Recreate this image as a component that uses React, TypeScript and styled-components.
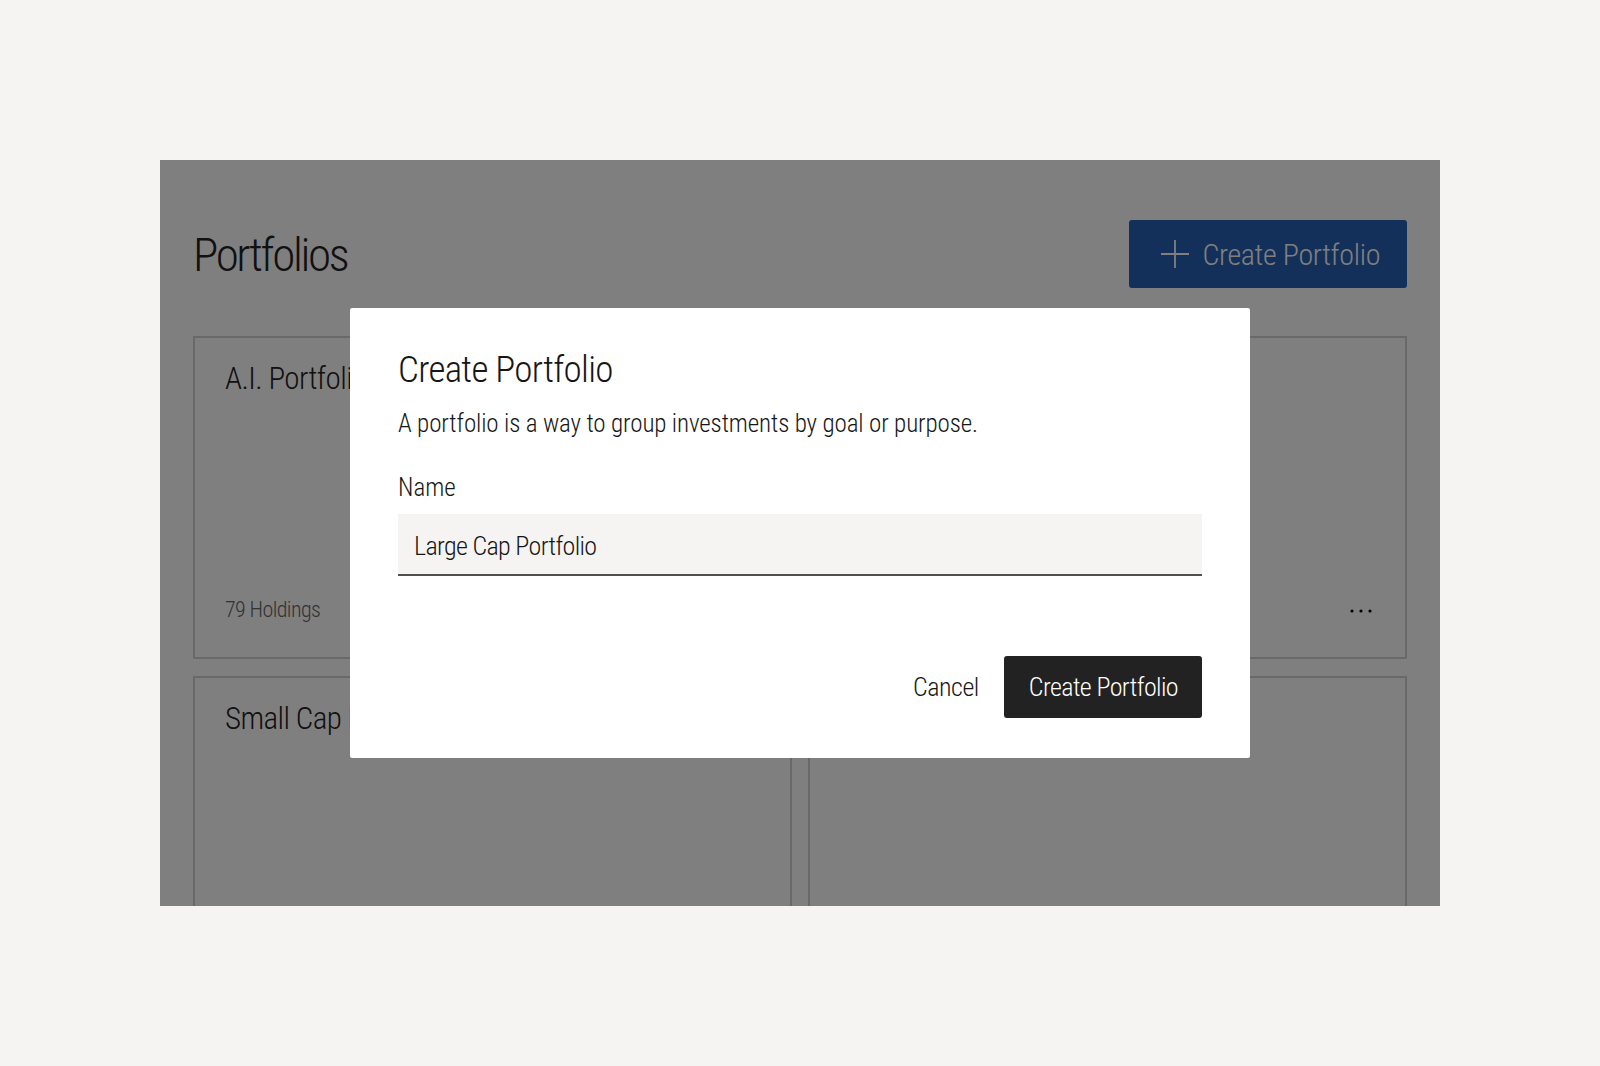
import React from "react";
import styled, { createGlobalStyle } from "styled-components";

const GlobalStyle = createGlobalStyle`
  * { box-sizing: border-box; }
  body {
    margin: 0;
    background: #f5f4f2;
    font-family: Roboto, "Liberation Sans", sans-serif;
    font-stretch: 75%;
    font-weight: 300;
    color: #161616;
  }
`;

const Page = styled.div`
  padding: 160px;
  height: 1066px;
`;

const Frame = styled.div`
  position: relative;
  width: 1280px;
  height: 746px;
  overflow: hidden;
  background: #ffffff;
`;

const Content = styled.main`
  padding: 60px 33px 0;
`;

const Header = styled.header`
  display: flex;
  align-items: center;
  justify-content: space-between;
  height: 68px;
`;

const PageTitle = styled.h1`
  margin: 0;
  font-size: 47px;
  line-height: 1;
  font-weight: 300;
  letter-spacing: -2.4px;
  color: #222;
`;

const PrimaryButton = styled.button`
  display: flex;
  align-items: center;
  gap: 13px;
  height: 68px;
  padding: 0 27px 0 32px;
  border: none;
  border-radius: 3px;
  background: #2660b4;
  color: #ffffff;
  font-family: inherit;
  font-stretch: 75%;
  font-weight: 300;
  font-size: 30px;
  letter-spacing: -0.35px;
`;

const Grid = styled.section`
  display: grid;
  grid-template-columns: 1fr 1fr;
  grid-auto-rows: 323px;
  gap: 17px 16px;
  margin-top: 48px;
`;

const Card = styled.article`
  display: flex;
  flex-direction: column;
  justify-content: space-between;
  border: 2px solid #d2d2d2;
  padding: 22px 33px 32px 30px;
`;

const CardTitle = styled.h2`
  margin: 0;
  font-size: 31px;
  line-height: 1.2;
  font-weight: 300;
  letter-spacing: -0.6px;
  color: #222;
`;

const CardFooter = styled.div`
  display: flex;
  align-items: center;
  justify-content: space-between;
`;

const Holdings = styled.span`
  font-size: 22px;
  line-height: 1.3;
  letter-spacing: -0.6px;
  color: #666;
`;

const MoreButton = styled.span`
  display: flex;
`;

const Overlay = styled.div`
  position: absolute;
  inset: 0;
  display: flex;
  align-items: center;
  justify-content: center;
  background: rgba(0, 0, 0, 0.5);
`;

const Modal = styled.div`
  display: flex;
  flex-direction: column;
  width: 900px;
  height: 450px;
  padding: 40px 48px 40px;
  background: #ffffff;
  border-radius: 2px;
`;

const ModalTitle = styled.h2`
  margin: 0;
  font-size: 37px;
  line-height: 1.2;
  font-weight: 300;
  letter-spacing: -0.7px;
`;

const ModalText = styled.p`
  margin: 17px 0 0;
  font-size: 25px;
  line-height: 1.2;
  letter-spacing: -0.12px;
`;

const Label = styled.label`
  display: block;
  margin-top: 34px;
  font-size: 25px;
  line-height: 1.2;
`;

const TextInput = styled.input`
  display: block;
  width: 100%;
  height: 62px;
  margin-top: 11px;
  padding: 4px 16px 0;
  border: none;
  border-bottom: 2px solid #4f4f4f;
  border-radius: 0;
  background: #f5f4f2;
  color: #161616;
  font-family: inherit;
  font-stretch: 75%;
  font-weight: 300;
  font-size: 26px;
  letter-spacing: -0.65px;
  outline: none;
`;

const Actions = styled.div`
  display: flex;
  justify-content: flex-end;
  align-items: center;
  gap: 25px;
  margin-top: auto;
`;

const GhostButton = styled.button`
  padding: 0;
  border: none;
  background: none;
  color: #161616;
  font-family: inherit;
  font-stretch: 75%;
  font-weight: 300;
  font-size: 26px;
  letter-spacing: -0.5px;
`;

const DarkButton = styled.button`
  height: 62px;
  padding: 0 24px 0 25px;
  border: none;
  border-radius: 3px;
  background: #222222;
  color: #ffffff;
  font-family: inherit;
  font-stretch: 75%;
  font-weight: 300;
  font-size: 26px;
  letter-spacing: -0.6px;
`;

const PlusIcon = () => (
  <svg width="28" height="28" viewBox="0 0 28 28" fill="none">
    <path d="M14 0v28M0 14h28" stroke="currentColor" strokeWidth="1.8" />
  </svg>
);

const DotsIcon = () => (
  <svg width="22" height="4" viewBox="0 0 22 4">
    <circle cx="2" cy="2" r="1.6" fill="#000" />
    <circle cx="11" cy="2" r="1.6" fill="#000" />
    <circle cx="20" cy="2" r="1.6" fill="#000" />
  </svg>
);

const portfolios = [
  { name: "A.I. Portfolio", holdings: 79 },
  { name: "Tech Growth", holdings: 42 },
  { name: "Small Cap Portfolio", holdings: 120 },
  { name: "Dividend", holdings: 35 },
];

export default function App() {
  return (
    <>
      <GlobalStyle />
      <Page>
        <Frame>
          <Content>
            <Header>
              <PageTitle>Portfolios</PageTitle>
              <PrimaryButton>
                <PlusIcon />
                Create Portfolio
              </PrimaryButton>
            </Header>
            <Grid>
              {portfolios.map((p) => (
                <Card key={p.name}>
                  <CardTitle>{p.name}</CardTitle>
                  <CardFooter>
                    <Holdings>{p.holdings} Holdings</Holdings>
                    <MoreButton>
                      <DotsIcon />
                    </MoreButton>
                  </CardFooter>
                </Card>
              ))}
            </Grid>
          </Content>
          <Overlay>
            <Modal role="dialog">
              <ModalTitle>Create Portfolio</ModalTitle>
              <ModalText>
                A portfolio is a way to group investments by goal or purpose.
              </ModalText>
              <Label htmlFor="portfolio-name">Name</Label>
              <TextInput id="portfolio-name" defaultValue="Large Cap Portfolio" />
              <Actions>
                <GhostButton>Cancel</GhostButton>
                <DarkButton>Create Portfolio</DarkButton>
              </Actions>
            </Modal>
          </Overlay>
        </Frame>
      </Page>
    </>
  );
}
